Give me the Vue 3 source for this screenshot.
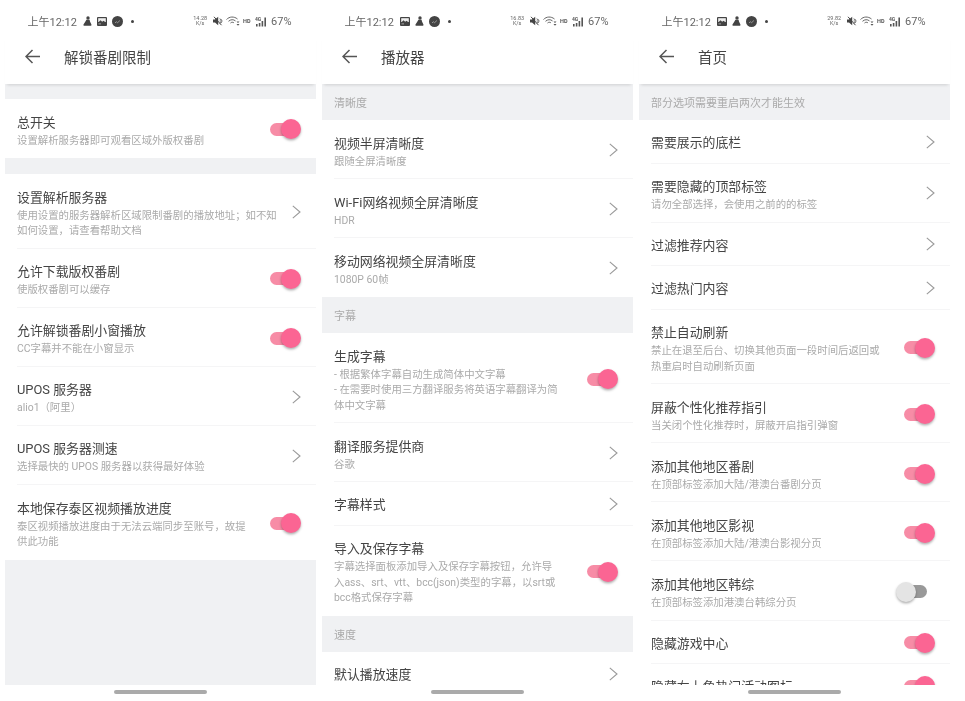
<script setup>
const t = (title, sub, kind = 'on') => ({ title, sub: sub ? (Array.isArray(sub) ? sub : [sub]) : [], kind })

const phones = [
  {
    title: '解锁番剧限制',
    speed: '14.28',
    order: ['person', 'picture', 'circle'],
    blocks: [
      { gap: 15 },
      { rows: [t('总开关', '设置解析服务器即可观看区域外版权番剧')] },
      { gap: 16 },
      {
        rows: [
          t('设置解析服务器', ['使用设置的服务器解析区域限制番剧的播放地址；如不知', '如何设置，请查看帮助文档'], 'arrow'),
          t('允许下载版权番剧', '使版权番剧可以缓存'),
          t('允许解锁番剧小窗播放', 'CC字幕并不能在小窗显示'),
          t('UPOS 服务器', 'alio1（阿里）', 'arrow'),
          t('UPOS 服务器测速', '选择最快的 UPOS 服务器以获得最好体验', 'arrow'),
          t('本地保存泰区视频播放进度', ['泰区视频播放进度由于无法云端同步至账号，故提', '供此功能'])
        ]
      }
    ]
  },
  {
    title: '播放器',
    speed: '16.83',
    order: ['picture', 'person', 'circle'],
    blocks: [
      { head: '清晰度' },
      {
        rows: [
          t('视频半屏清晰度', '跟随全屏清晰度', 'arrow'),
          t('Wi-Fi网络视频全屏清晰度', 'HDR', 'arrow'),
          t('移动网络视频全屏清晰度', '1080P 60帧', 'arrow')
        ]
      },
      { head: '字幕' },
      {
        rows: [
          t('生成字幕', ['- 根据繁体字幕自动生成简体中文字幕', '- 在需要时使用三方翻译服务将英语字幕翻译为简', '体中文字幕']),
          t('翻译服务提供商', '谷歌', 'arrow'),
          t('字幕样式', '', 'arrow'),
          t('导入及保存字幕', ['字幕选择面板添加导入及保存字幕按钮，允许导', '入ass、srt、vtt、bcc(json)类型的字幕，以srt或', 'bcc格式保存字幕'])
        ]
      },
      { head: '速度' },
      { rows: [t('默认播放速度', '', 'arrow')] }
    ]
  },
  {
    title: '首页',
    speed: '29.82',
    order: ['picture', 'person', 'circle'],
    blocks: [
      { head: '部分选项需要重启两次才能生效' },
      {
        rows: [
          t('需要展示的底栏', '', 'arrow'),
          t('需要隐藏的顶部标签', '请勿全部选择，会使用之前的的标签', 'arrow'),
          t('过滤推荐内容', '', 'arrow'),
          t('过滤热门内容', '', 'arrow'),
          t('禁止自动刷新', ['禁止在退至后台、切换其他页面一段时间后返回或', '热重启时自动刷新页面']),
          t('屏蔽个性化推荐指引', '当关闭个性化推荐时，屏蔽开启指引弹窗'),
          t('添加其他地区番剧', '在顶部标签添加大陆/港澳台番剧分页'),
          t('添加其他地区影视', '在顶部标签添加大陆/港澳台影视分页'),
          t('添加其他地区韩综', '在顶部标签添加港澳台韩综分页', 'off'),
          t('隐藏游戏中心'),
          t('隐藏右上角热门活动图标')
        ]
      }
    ]
  }
]
</script>

<template>
  <div class="phones">
    <section v-for="p in phones" :key="p.title" class="phone">
      <div class="status">
        <div class="status-left">
          <span class="time">上午12:12</span>
          <template v-for="ic in p.order" :key="ic">
            <svg v-if="ic === 'person'" class="si" width="9" height="10" viewBox="0 0 9 10">
              <circle cx="5" cy="2" r="1.700" fill="#444" />
              <path d="M3.400 3.800h3.200l.4 1.600 1.400 3c.3.800-.2 1.400-1 1.400H1.600C.7 9.800.2 9.200.5 8.400l1.900-2.800z" fill="#444" />
            </svg>
            <svg v-else-if="ic === 'picture'" class="si" width="10" height="9" viewBox="0 0 10 9">
              <rect width="10" height="9" rx="1" fill="#444" />
              <rect x="1.200" y="1.200" width="7.600" height="3.800" fill="#eee" />
              <path d="M1.200 5.400l2.300-2.200 1.700 1.600 1.300-1.100 2.300 1.900v1H1.200z" fill="#444" />
              <rect x="1.500" y="6.500" width="2.500" height=".8" fill="#bbb" />
            </svg>
            <svg v-else class="si" width="11" height="11" viewBox="0 0 11 11">
              <circle cx="5.500" cy="5.500" r="5.500" fill="#444" />
              <path d="M3 6.800l1.600-1 1 .9 2.300-2.200" fill="none" stroke="#aaa" stroke-width=".8" />
            </svg>
          </template>
          <span class="dot"></span>
        </div>
        <div class="status-right">
          <span class="speed">{{ p.speed }}<br />K/s</span>
          <svg width="10" height="10" viewBox="0 0 10 10">
            <path d="M0 3.500h2L5.200.8v8.400L2 6.500H0z" fill="#444" />
            <path d="M1 .8l7.500 8.400" stroke="#444" stroke-width="1" />
            <path d="M6.600 2.800l2.400 1.400M6.600 5h3M6.600 7.200l2.400-1.200" stroke="#555" stroke-width=".9" />
          </svg>
          <svg width="14" height="10" viewBox="0 0 14 10">
            <path d="M.5 3.500C3.500.4 8 .2 11.500 3M2.500 5.300c2.200-2 5-2.100 7-.4M4.500 7c1-.9 2.400-1 3.400-.2" fill="none" stroke="#666" stroke-width="1" />
            <path d="M10.500 5.500h3l-1.500 1.500zM10.500 8h3L12 9.700z" fill="#555" />
          </svg>
          <svg width="9" height="6" viewBox="0 0 9 6">
            <text x="0" y="5.200" font-size="5.500" font-weight="700" font-family="Roboto, sans-serif" fill="#555">HD</text>
          </svg>
          <svg width="13" height="11" viewBox="0 0 13 11">
            <text x="0" y="4.800" font-size="5" font-weight="700" font-family="Roboto, sans-serif" fill="#555">4G</text>
            <path d="M1 8h1.600v2.500H1zM3.800 7h1.600v3.500H3.800zM6.600 5h1.600v5.500H6.600zM9.400 1.500H11v9H9.400z" fill="#555" />
          </svg>
          <span class="batt">67%</span>
        </div>
      </div>

      <header class="toolbar">
        <svg class="back" width="15" height="15" viewBox="0 0 15 15">
          <path d="M15 7.500H1.200M7.500 1L1 7.500 7.500 14" fill="none" stroke="#555" stroke-width="1.500" />
        </svg>
        <h1 class="page-title">{{ p.title }}</h1>
      </header>

      <main class="content">
        <template v-for="(b, i) in p.blocks" :key="i">
          <div v-if="b.gap" class="gap" :style="{ height: b.gap + 'px' }"></div>
          <div v-else-if="b.head" class="head">{{ b.head }}</div>
          <div v-else class="group">
            <div
              v-for="r in b.rows"
              :key="r.title"
              class="row"
              :class="{ plain: !r.sub.length }"
            >
              <div class="text">
                <div class="title">{{ r.title }}</div>
                <div v-for="l in r.sub" :key="l" class="sub">{{ l }}</div>
              </div>
              <svg v-if="r.kind === 'arrow'" class="chev" width="9" height="14" viewBox="0 0 9 14">
                <path d="M.8 .8L8 7 .8 13.200" fill="none" stroke="#999" stroke-width="1.100" />
              </svg>
              <span v-else class="toggle" :class="r.kind">
                <span class="track"></span>
                <span class="knob"></span>
              </span>
            </div>
          </div>
        </template>
      </main>

      <div class="home"><span class="pill"></span></div>
    </section>
  </div>
</template>

<style scoped>
.phones {
  display: flex;
  gap: 6px;
  padding-left: 5px;
  height: 701px;
  width: 965px;
  box-sizing: border-box;
  background: #fff;
  font-family: Roboto, "Noto Sans CJK SC", sans-serif;
  filter: blur(0.35px);
}
.phone {
  width: 311px;
  height: 701px;
  display: flex;
  flex-direction: column;
  background: #fff;
}
.status {
  height: 36px;
  flex: none;
  display: flex;
  align-items: center;
  justify-content: space-between;
  padding: 6px 24.500px 0 22.500px;
  box-sizing: border-box;
  color: #666;
  font-size: 11px;
}
.status-left,
.status-right {
  display: flex;
  align-items: center;
}
.time {
  margin-right: 6px;
}
.si {
  margin-right: 5px;
}
.dot {
  width: 3px;
  height: 3px;
  border-radius: 50%;
  background: #444;
  margin-left: 3px;
}
.status-right {
  gap: 3px;
}
.speed {
  font-size: 5.500px;
  line-height: 5.500px;
  text-align: center;
  color: #666;
  margin-right: 3px;
}
.toolbar {
  height: 48px;
  flex: none;
  display: flex;
  align-items: center;
  padding-left: 20px;
  background: #fff;
  box-shadow: 0 3px 3px -2px rgba(0, 0, 0, 0.14);
  position: relative;
  z-index: 1;
}
.back {
  margin-top: -7px;
}
.page-title {
  margin: -8px 0 0 24px;
  font-size: 14.500px;
  font-weight: 400;
  color: #444;
}
.content {
  flex: 1;
  min-height: 0;
  overflow: hidden;
  background: #f0f1f3;
}
.head {
  height: 36px;
  line-height: 39px;
  padding-left: 12px;
  font-size: 11px;
  color: #aaa;
}
.group {
  background: #fff;
}
.row {
  margin-left: 12px;
  padding: 13.500px 15px 9.100px 0;
  display: flex;
  align-items: center;
  justify-content: space-between;
  border-bottom: 1px solid #f5f5f6;
  box-sizing: border-box;
}
.row.plain {
  padding-top: 13px;
  padding-bottom: 9.500px;
}
.row:last-child {
  border-bottom: 0;
  padding-bottom: 10.100px;
}
.row.plain:last-child {
  padding-bottom: 10.500px;
}
.text {
  min-width: 0;
  white-space: nowrap;
}
.title {
  height: 20px;
  font-size: 12.900px;
  line-height: 20px;
  color: #444;
}
.sub {
  height: 15.500px;
  font-size: 10.400px;
  line-height: 15.500px;
  color: #aaa;
}
.chev {
  flex: none;
  margin-top: -3px;
}
.toggle {
  flex: none;
  position: relative;
  width: 39px;
  height: 20px;
  margin-top: -2px;
}
.track {
  position: absolute;
  top: 3.500px;
  height: 13px;
  width: 29px;
  border-radius: 7px;
}
.knob {
  position: absolute;
  top: 0;
  width: 20px;
  height: 20px;
  border-radius: 50%;
  box-shadow: 0 1.500px 2.500px rgba(0, 0, 0, 0.3);
}
.toggle.on .track {
  left: 8px;
  background: #f78ca6;
}
.toggle.on .knob {
  left: 19px;
  background: #fb6593;
}
.toggle.off .track {
  left: 2px;
  background: #999;
}
.toggle.off .knob {
  left: 0;
  background: #e4e4e4;
}
.home {
  height: 16px;
  flex: none;
  display: flex;
  justify-content: center;
  padding-top: 4.500px;
  box-sizing: border-box;
  background: #fff;
}
.pill {
  width: 93px;
  height: 4px;
  border-radius: 2px;
  background: #aaa;
}
</style>
